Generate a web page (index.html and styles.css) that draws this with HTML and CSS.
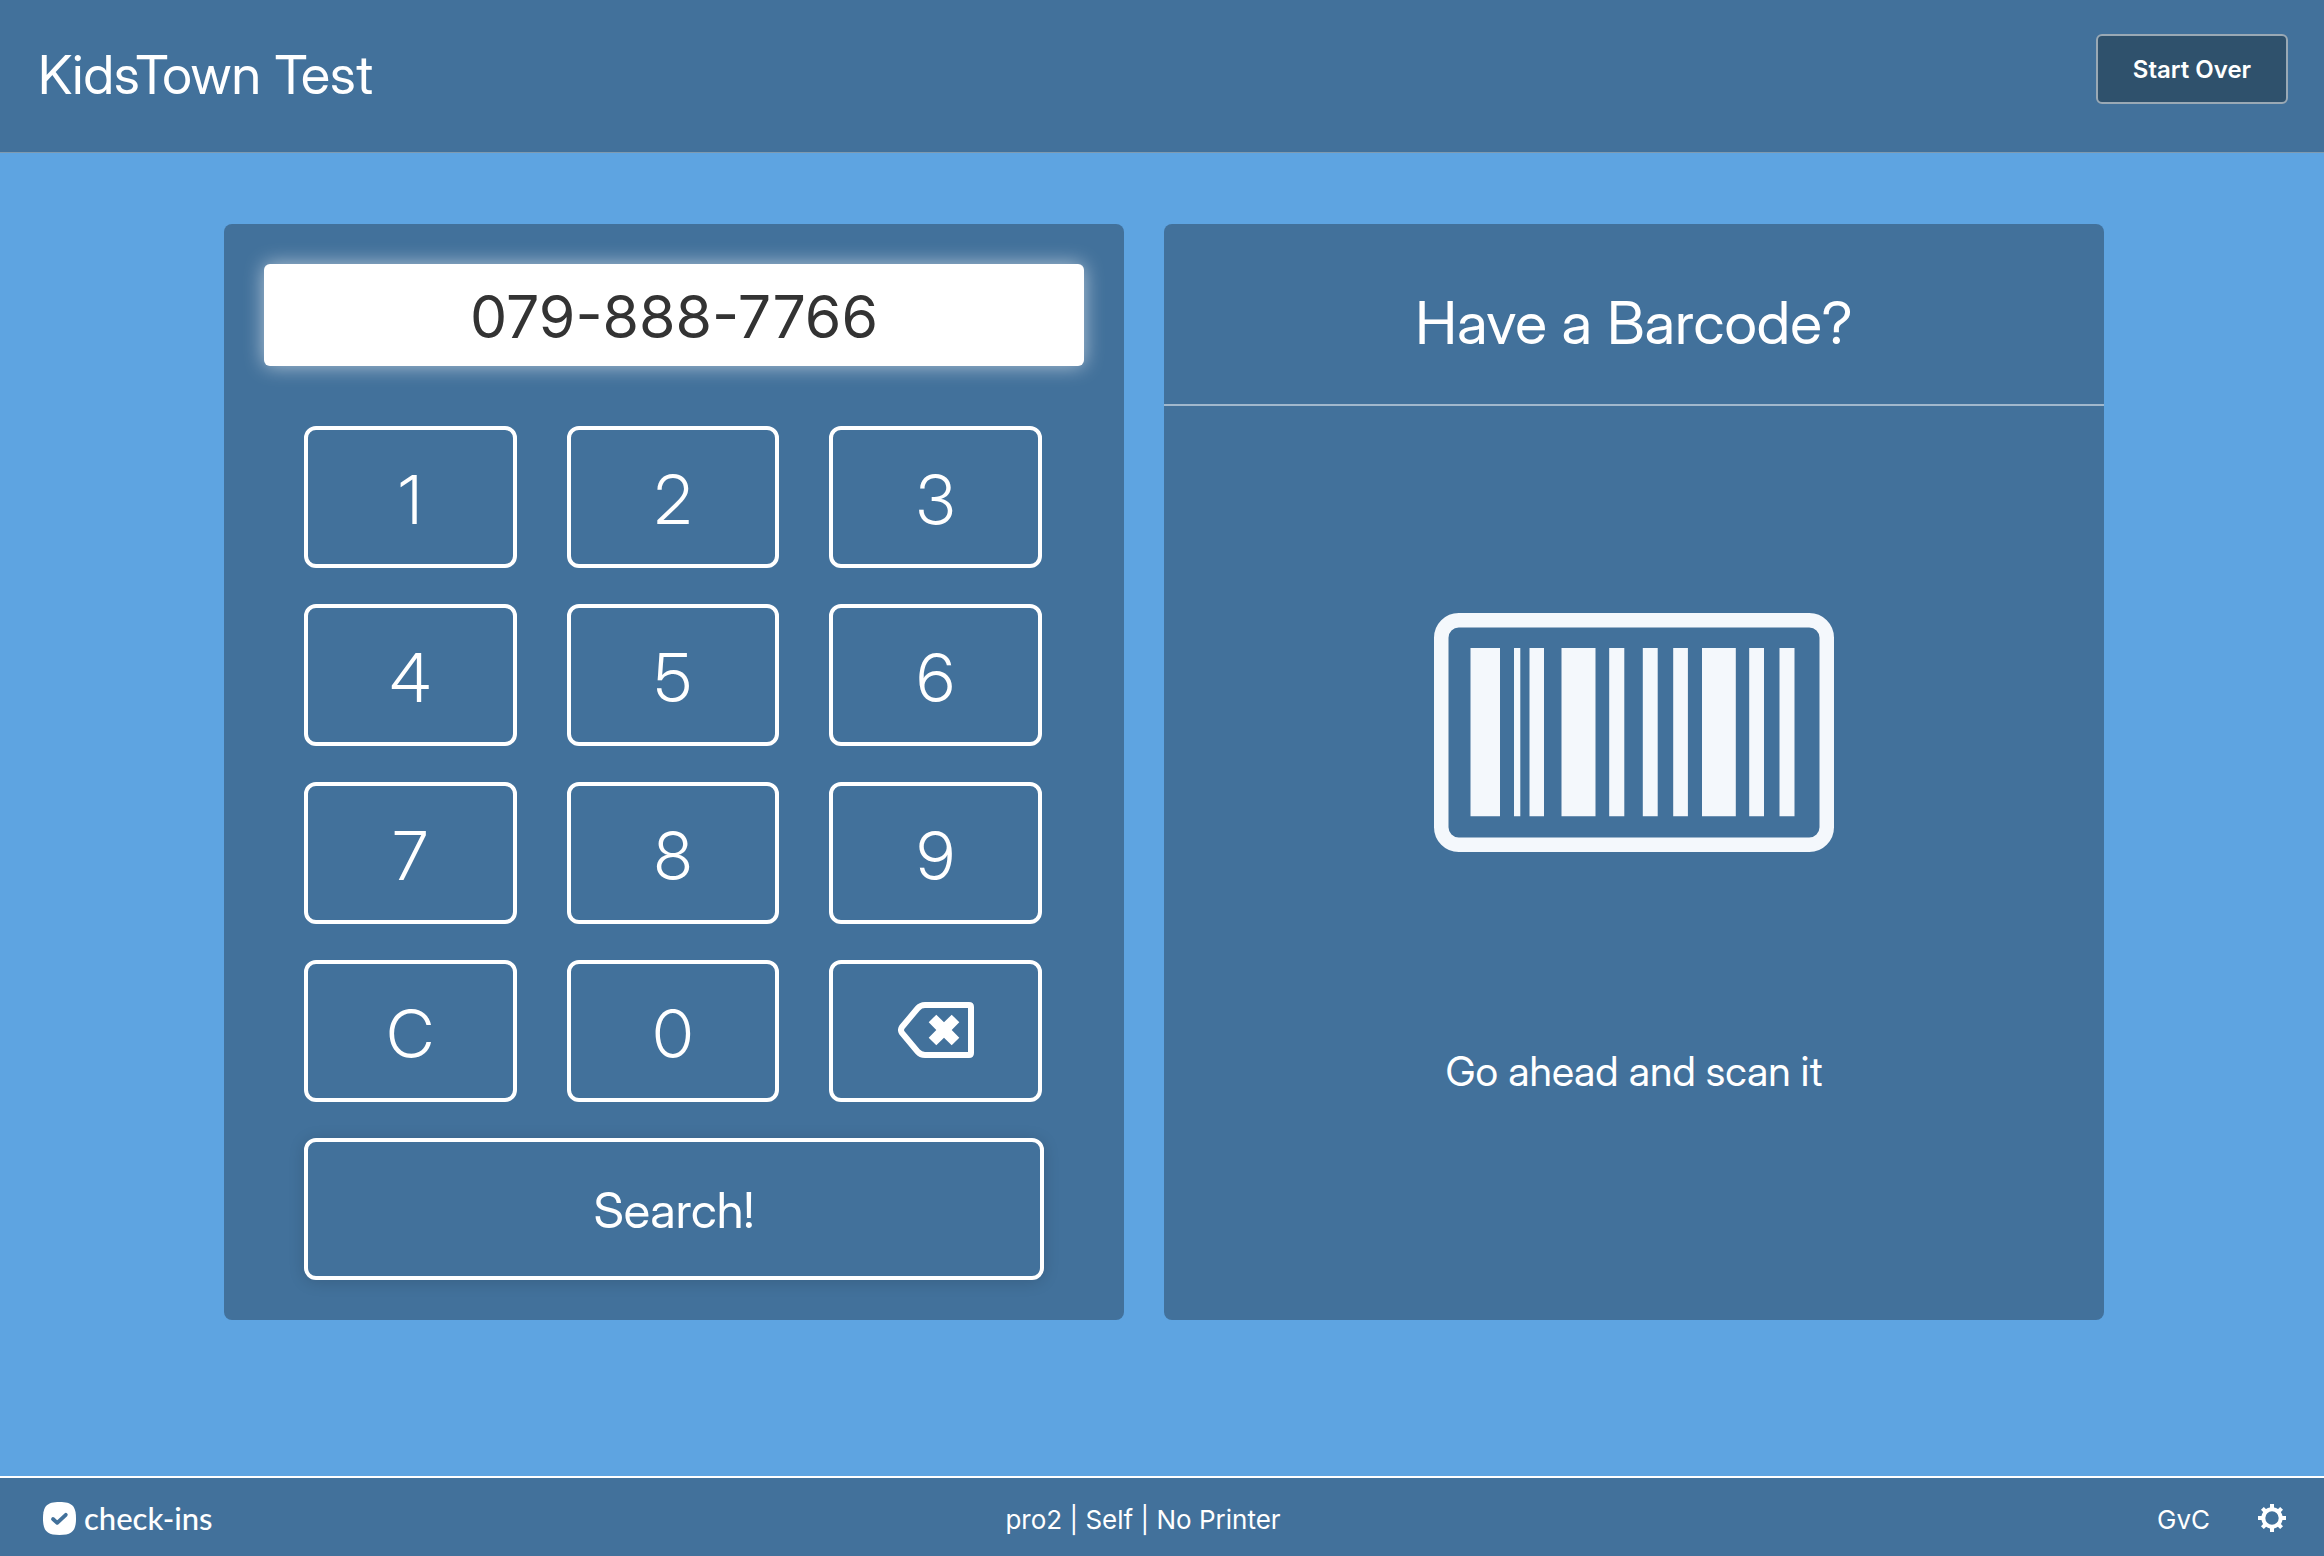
FILE: index.html
```html
<!DOCTYPE html>
<html lang="en">
<head>
<meta charset="utf-8">
<meta name="viewport" content="width=device-width, initial-scale=1">
<title>KidsTown Test</title>
<link rel="stylesheet" href="styles.css">
</head>
<body>
<header class="topbar">
  <h1 class="topbar-title">KidsTown Test</h1>
  <button class="start-over" type="button">Start Over</button>
</header>
<main class="station">
  <form class="panel lookup">
    <input class="phone" type="text" inputmode="numeric" aria-label="Phone number" value="079-888-7766">
    <div class="keys">
      <button class="key" type="button">1</button>
      <button class="key" type="button">2</button>
      <button class="key" type="button">3</button>
      <button class="key" type="button">4</button>
      <button class="key" type="button">5</button>
      <button class="key" type="button">6</button>
      <button class="key" type="button">7</button>
      <button class="key" type="button">8</button>
      <button class="key" type="button">9</button>
      <button class="key" type="button">C</button>
      <button class="key" type="button">0</button>
      <button class="key key-delete" type="button" aria-label="Delete">
        <svg class="key-icon" viewBox="0 0 76 56" aria-hidden="true">
          <path d="M4 25 19.500 6.500Q22.500 3 27 3H71Q73 3 73 5V51Q73 53 71 53H27Q22.500 53 19.500 49.500L4 31Q2 28 4 25Z" fill="none" stroke="#fff" stroke-width="6"/>
          <path d="M38.300 12.700 46 20.300 53.700 12.700 61.300 20.300 53.700 28 61.300 35.700 53.700 43.300 46 35.700 38.300 43.300 30.700 35.700 38.300 28 30.700 20.300Z" fill="#fff"/>
        </svg>
      </button>
    </div>
    <button class="key search" type="button">Search!</button>
  </form>
  <section class="panel scan">
    <h2 class="scan-title">Have a Barcode?</h2>
    <div class="scan-body">
      <svg class="barcode" viewBox="0 0 400 239" aria-hidden="true">
        <rect x="7.250" y="7.250" width="385.500" height="224.500" rx="17.500" fill="none" stroke="#f4f8fc" stroke-width="14.500"/>
        <path fill="#f4f8fc" d="M36.500 35H66V203.300H36.500ZM80 35H86.300V203.300H80ZM95.500 35H110V203.300H95.500ZM127.500 35H161.500V203.300H127.500ZM175.200 35H190.300V203.300H175.200ZM208.800 35H223.700V203.300H208.800ZM239.200 35H253.900V203.300H239.200ZM268 35H301.800V203.300H268ZM315.200 35H330V203.300H315.200ZM345.500 35H360.500V203.300H345.500Z"/>
      </svg>
      <p class="scan-hint">Go ahead and scan it</p>
    </div>
  </section>
</main>
<footer class="bottombar">
  <a class="brand" href="#">
    <svg class="brand-icon" viewBox="0 0 33 33" aria-hidden="true">
      <path d="M16.500 0C29 0 33 4 33 16.500S29 33 16.500 33 0 29 0 16.500 4 0 16.500 0Z" fill="#fff"/>
      <path d="M10 17 14.200 20.800 22.800 12.800" fill="none" stroke="#42719b" stroke-width="3.800" stroke-linecap="round" stroke-linejoin="round"/>
    </svg>
    <span>check-ins</span>
  </a>
  <p class="status">pro2 | Self | No Printer</p>
  <div class="account">
    <span class="status">GvC</span>
    <a class="settings" href="#" aria-label="Settings">
      <svg class="settings-icon" viewBox="-14 -14 28 28" aria-hidden="true">
        <circle r="8.700" fill="none" stroke="#fff" stroke-width="4"/>
        <path d="M0-14V-9M0 14V9M-14 0H-9M14 0H9M-9.600-9.600-7-7M9.600-9.600 7-7M-9.600 9.600-7 7M9.600 9.600 7 7" stroke="#fff" stroke-width="4"/>
      </svg>
    </a>
  </div>
</footer>
</body>
</html>
```
FILE: styles.css
```css
* {
  box-sizing: border-box;
}

body {
  display: flex;
  flex-direction: column;
  min-height: 100vh;
  margin: 0;
  background: #5ea4e1;
  color: #fff;
  font-family: "Inter Display", Inter, "Liberation Sans", sans-serif;
}

h1,
h2,
p {
  margin: 0;
  font-weight: 400;
}

button,
input {
  font-family: inherit;
}

.topbar {
  display: flex;
  align-items: flex-start;
  justify-content: space-between;
  padding: 35px 36px 37px 38px;
  border-bottom: 1px solid #7f9aaf;
  background: #42719b;
}

.topbar-title {
  font-size: 54px;
  line-height: 80px;
}

.start-over {
  width: 192px;
  height: 70px;
  margin-top: -1px;
  padding: 0;
  border: 2px solid #9aa9b5;
  border-radius: 6px;
  background: #2f516c;
  color: #fff;
  font-family: Inter, sans-serif;
  font-size: 24px;
  font-weight: 600;
}

.station {
  display: grid;
  flex: 1;
  grid-template-columns: 900fr 940fr;
  align-content: start;
  gap: 40px;
  padding: 71px 220px 72px 224px;
}

.panel {
  border-radius: 8px;
  background: #42719b;
}

.lookup {
  display: flex;
  flex-direction: column;
  padding: 40px;
}

.phone {
  width: 100%;
  height: 102px;
  padding: 2px 16px 0;
  border: 0;
  border-radius: 6px;
  outline: 0;
  background: #fff;
  box-shadow: 0 0 20px rgba(255, 255, 255, 0.6);
  color: #333;
  font-family: Inter, sans-serif;
  font-size: 59px;
  text-align: center;
}

.keys {
  display: grid;
  grid-template-columns: repeat(3, 1fr);
  gap: 36px 50px;
  margin: 60px 42px 36px 40px;
}

.key {
  display: flex;
  align-items: center;
  justify-content: center;
  height: 142px;
  padding: 4px 0 0;
  border: 4px solid #fff;
  border-radius: 12px;
  background: #42719b;
  color: #fff;
  font-size: 67px;
  font-weight: 300;
}

.key-delete {
  padding: 0 0 2px;
}

.key-icon {
  width: 76px;
  height: 56px;
}

.search {
  margin: 0 40px;
  padding: 2px 0 0;
  box-shadow: 0 2px 16px rgba(0, 0, 0, 0.15);
  font-size: 49px;
  font-weight: 400;
}

.scan-title {
  padding: 59px 40px 41px;
  border-bottom: 2px solid #a1b8cd;
  font-size: 59px;
  line-height: 80px;
  text-align: center;
}

.scan-body {
  display: flex;
  flex-direction: column;
  align-items: center;
  gap: 189px;
  padding-top: 207px;
}

.barcode {
  width: 400px;
  height: 239px;
}

.scan-hint {
  font-size: 41px;
  line-height: 60px;
}

.bottombar {
  display: grid;
  grid-template-columns: 1fr auto 1fr;
  align-items: center;
  height: 80px;
  padding: 2px 38px 0 0;
  border-top: 2px solid #fff;
  background: #42719b;
}

.brand {
  display: flex;
  align-items: center;
  gap: 8px;
  margin-left: 43px;
  color: #fff;
  font-family: Lato, sans-serif;
  font-size: 31px;
  font-weight: 500;
  line-height: 36px;
  text-decoration: none;
}

.brand-icon {
  width: 33px;
  height: 33px;
}

.status {
  padding-top: 4px;
  font-family: Inter, sans-serif;
  font-size: 26px;
  line-height: 36px;
}

.account {
  display: flex;
  align-items: center;
  justify-content: flex-end;
  gap: 48px;
}

.settings {
  display: flex;
}

.settings-icon {
  width: 28px;
  height: 28px;
}
```
